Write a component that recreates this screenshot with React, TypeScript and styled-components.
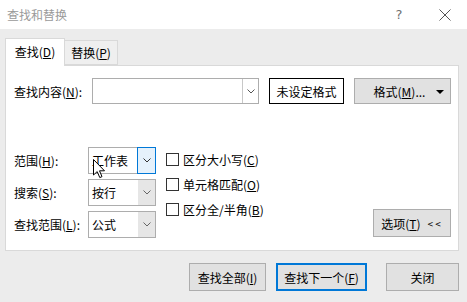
import { Fragment } from 'react';
import styled, { createGlobalStyle } from 'styled-components';

const GlobalStyle = createGlobalStyle`
  html, body { margin: 0; padding: 0; }
  body {
    font-family: "Noto Sans CJK SC", "Microsoft YaHei", sans-serif;
    font-size: 12px;
    color: #000;
  }
  * { box-sizing: border-box; }
`;

const Dialog = styled.div`
  width: 467px;
  height: 302px;
  display: flex;
  flex-direction: column;
  background: #ececec;
  overflow: hidden;
`;

const TitleBar = styled.div`
  height: 29px;
  flex-shrink: 0;
  background: #fff;
  display: flex;
  align-items: center;
  padding-left: 7px;
`;

const Title = styled.span`
  flex: 1;
  color: #9a9a9a;
  line-height: 1;
`;

const TitleButton = styled.div<{ w: number }>`
  width: ${(p) => p.w}px;
  height: 29px;
  display: flex;
  align-items: center;
  justify-content: center;
  color: #707070;
  font-family: "DejaVu Sans", sans-serif;
  font-size: 13px;
`;

const Body = styled.div`
  flex: 1;
  padding: 9px 8px 0 5px;
  display: flex;
  flex-direction: column;
`;

const Tabs = styled.div`
  height: 27px;
  display: flex;
  align-items: flex-end;
`;

const Tab = styled.div<{ active?: boolean; w: number }>`
  width: ${(p) => p.w}px;
  height: ${(p) => (p.active ? 28 : 25)}px;
  margin-bottom: ${(p) => (p.active ? -1 : 0)}px;
  position: relative;
  z-index: ${(p) => (p.active ? 1 : 0)};
  background: ${(p) => (p.active ? '#fff' : '#efefef')};
  border: 1px solid #d9d9d9;
  border-bottom: ${(p) => (p.active ? 'none' : '1px solid #d9d9d9')};
  border-left: ${(p) => (p.active ? '1px solid #d9d9d9' : 'none')};
  display: flex;
  align-items: center;
  justify-content: center;
  padding-bottom: ${(p) => (p.active ? 2 : 0)}px;
`;

const Panel = styled.div`
  height: 186px;
  background: #fff;
  border: 1px solid #d9d9d9;
  padding: 12px 7px 0 8px;
  display: flex;
  flex-direction: column;
`;

const FindRow = styled.div`
  height: 26px;
  display: flex;
  align-items: center;
`;

const FindLabel = styled.div`
  width: 78px;
`;

const Combo = styled.div`
  width: 167px;
  height: 26px;
  border: 1px solid #adadad;
  display: flex;
  background: #fff;
`;

const ComboInput = styled.div`
  flex: 1;
`;

const ComboArrow = styled.div`
  width: 16px;
  border-left: 1px solid #c8c8c8;
  display: flex;
  align-items: center;
  justify-content: center;
`;

const FormatStatus = styled.div`
  margin-left: 10px;
  width: 75px;
  height: 26px;
  border: 1px solid #000;
  display: flex;
  align-items: center;
  justify-content: center;
`;

const Button = styled.div<{ w: number; h?: number; primary?: boolean; gapBefore?: number }>`
  width: ${(p) => p.w}px;
  height: ${(p) => p.h ?? 28}px;
  margin-left: ${(p) => p.gapBefore ?? 0}px;
  background: #e1e1e1;
  border: ${(p) => (p.primary ? '2px solid #0078d7' : '1px solid #adadad')};
  display: flex;
  align-items: center;
  justify-content: center;
`;

const FormatButton = styled(Button)`
  position: relative;
  padding-right: 6px;
`;

const Caret = styled.span`
  position: absolute;
  right: 6px;
  top: 11px;
  width: 0;
  height: 0;
  border-left: 4px solid transparent;
  border-right: 4px solid transparent;
  border-top: 4px solid #000;
`;

const Lower = styled.div`
  margin-top: 43px;
  display: flex;
  align-items: flex-start;
`;

const OptionGrid = styled.div`
  display: grid;
  grid-template-columns: 74px 68px;
  grid-auto-rows: 27px;
  row-gap: 5px;
  align-items: center;
`;

const Select = styled.div`
  height: 27px;
  border: 1px solid #adadad;
  display: flex;
  position: relative;
  background: #fff;
`;

const SelectValue = styled.div`
  flex: 1;
  display: flex;
  align-items: center;
  padding-left: 3px;
`;

const SelectArrow = styled.div<{ focused?: boolean }>`
  width: ${(p) => (p.focused ? 19 : 17)}px;
  margin: ${(p) => (p.focused ? '-1px -1px -1px 0' : '0')};
  background: ${(p) => (p.focused ? '#e5f1fb' : '#e6e6e6')};
  border: ${(p) => (p.focused ? '1px solid #0078d7' : 'none')};
  display: flex;
  align-items: center;
  justify-content: center;
`;

const Cursor = styled.svg`
  position: absolute;
  left: 4px;
  top: 11px;
`;

const Checks = styled.div`
  margin-left: 10px;
  padding-top: 6px;
  display: flex;
  flex-direction: column;
  gap: 12px;
`;

const CheckRow = styled.label`
  display: flex;
  align-items: center;
  height: 13px;
`;

const Box = styled.span`
  width: 13px;
  height: 13px;
  border: 1px solid #333;
  margin-right: 4px;
  background: #fff;
`;

const OptionsButton = styled(Button)`
  margin-left: auto;
  margin-top: 62px;
  gap: 7px;
`;

const Chevrons = styled.span`
  font-size: 10px;
  letter-spacing: 2px;
`;

const Footer = styled.div`
  display: flex;
  justify-content: flex-end;
  padding-top: 12px;
`;

const U = styled.span`
  text-decoration: underline;
  text-underline-offset: 1px;
`;

const Chevron = ({ color = '#555' }: { color?: string }) => (
  <svg width="8" height="5" viewBox="0 0 8 5">
    <polyline points="0.5,0.5 4,4 7.5,0.5" fill="none" stroke={color} strokeWidth="1" />
  </svg>
);

const checks: [string, string][] = [
  ['区分大小写', 'C'],
  ['单元格匹配', 'O'],
  ['区分全/半角', 'B'],
];

const selects: { label: string; key: string; value: string; focused?: boolean }[] = [
  { label: '范围', key: 'H', value: '工作表', focused: true },
  { label: '搜索', key: 'S', value: '按行' },
  { label: '查找范围', key: 'L', value: '公式' },
];

export default function App() {
  return (
    <>
      <GlobalStyle />
      <Dialog>
        <TitleBar>
          <Title>查找和替换</Title>
          <TitleButton w={46}>?</TitleButton>
          <TitleButton w={45}>
            <svg width="12" height="12" viewBox="0 0 12 12">
              <path d="M0.5 0.5 L11.5 11.5 M11.5 0.5 L0.5 11.5" stroke="#555" strokeWidth="1" />
            </svg>
          </TitleButton>
        </TitleBar>
        <Body>
          <Tabs>
            <Tab active w={60}>
              查找(<U>D</U>)
            </Tab>
            <Tab w={53}>
              替换(<U>P</U>)
            </Tab>
          </Tabs>
          <Panel>
            <FindRow>
              <FindLabel>
                查找内容(<U>N</U>):
              </FindLabel>
              <Combo>
                <ComboInput />
                <ComboArrow>
                  <Chevron />
                </ComboArrow>
              </Combo>
              <FormatStatus>未设定格式</FormatStatus>
              <FormatButton w={97} h={26} gapBefore={10}>
                格式(<U>M</U>)...
                <Caret />
              </FormatButton>
            </FindRow>
            <Lower>
              <OptionGrid>
                {selects.map((s) => (
                  <Fragment key={s.key}>
                    <span>
                      {s.label}(<U>{s.key}</U>):
                    </span>
                    <Select>
                      <SelectValue>{s.value}</SelectValue>
                      <SelectArrow focused={s.focused}>
                        <Chevron color={s.focused ? '#333' : '#666'} />
                      </SelectArrow>
                      {s.focused && (
                        <Cursor width="13" height="20" viewBox="0 0 13 20">
                          <path
                            d="M0.5 0.5 L0.5 16 L4.2 12.6 L6.8 18.6 L9 17.6 L6.5 11.8 L11.5 11.8 Z"
                            fill="#fff"
                            stroke="#000"
                            strokeWidth="1"
                          />
                        </Cursor>
                      )}
                    </Select>
                  </Fragment>
                ))}
              </OptionGrid>
              <Checks>
                {checks.map(([text, key]) => (
                  <CheckRow key={key}>
                    <Box />
                    {text}(<U>{key}</U>)
                  </CheckRow>
                ))}
              </Checks>
              <OptionsButton w={78}>
                <span>
                  选项(<U>T</U>)
                </span>
                <Chevrons>&lt;&lt;</Chevrons>
              </OptionsButton>
            </Lower>
          </Panel>
          <Footer>
            <Button w={77}>
              查找全部(<U>I</U>)
            </Button>
            <Button w={91} primary gapBefore={10}>
              查找下一个(<U>F</U>)
            </Button>
            <Button w={73} gapBefore={19}>
              关闭
            </Button>
          </Footer>
        </Body>
      </Dialog>
    </>
  );
}
